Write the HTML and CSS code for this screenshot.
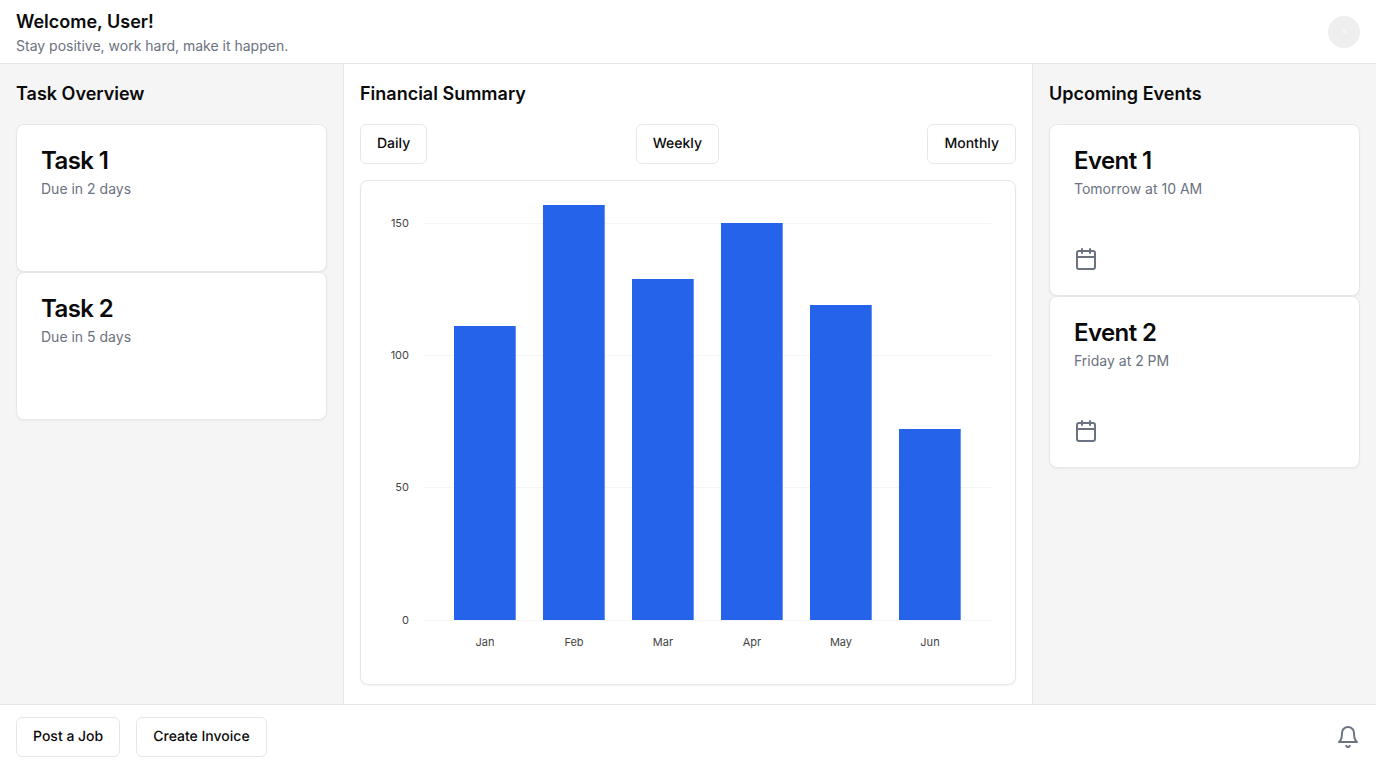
FILE: index.html
```html
<!DOCTYPE html>
<html lang="en">
<head>
<meta charset="utf-8">
<title>Dashboard</title>
<link rel="stylesheet" href="styles.css">
</head>
<body>
<div class="app">
  <header class="topbar">
    <div>
      <h1 class="welcome">Welcome, User!</h1>
      <p class="tagline">Stay positive, work hard, make it happen.</p>
    </div>
    <div class="avatar"><span class="avatar-dot"></span></div>
  </header>
  <main class="columns">
    <section class="col side">
      <h2 class="col-title">Task Overview</h2>
      <div class="stack">
        <article class="card">
          <h3 class="card-title">Task 1</h3>
          <p class="card-sub">Due in 2 days</p>
          <div class="card-foot"></div>
        </article>
        <article class="card">
          <h3 class="card-title">Task 2</h3>
          <p class="card-sub">Due in 5 days</p>
          <div class="card-foot"></div>
        </article>
      </div>
    </section>
    <section class="col center">
      <h2 class="col-title">Financial Summary</h2>
      <div class="range">
        <button class="btn">Daily</button>
        <button class="btn">Weekly</button>
        <button class="btn">Monthly</button>
      </div>
      <div class="chart-card">
        <svg class="chart" width="654" height="503" viewBox="361 181 654 503">
          <g class="grid">
            <line x1="424" x2="991" y1="223.5" y2="223.5"/>
            <line x1="424" x2="991" y1="355.5" y2="355.5"/>
            <line x1="424" x2="991" y1="487.5" y2="487.5"/>
            <line x1="424" x2="991" y1="620.5" y2="620.5"/>
          </g>
          <g class="bars">
            <rect x="454" y="326" width="61.7" height="294"/>
            <rect x="543" y="205" width="61.7" height="415"/>
            <rect x="632" y="279" width="61.7" height="341"/>
            <rect x="721" y="223" width="61.7" height="397"/>
            <rect x="810" y="305" width="61.7" height="315"/>
            <rect x="899" y="429" width="61.7" height="191"/>
          </g>
          <g class="y-labels">
            <text x="409" y="227">150</text>
            <text x="409" y="359">100</text>
            <text x="409" y="491">50</text>
            <text x="409" y="624">0</text>
          </g>
          <g class="x-labels">
            <text x="485" y="646">Jan</text>
            <text x="574" y="646">Feb</text>
            <text x="663" y="646">Mar</text>
            <text x="752" y="646">Apr</text>
            <text x="841" y="646">May</text>
            <text x="930" y="646">Jun</text>
          </g>
        </svg>
      </div>
    </section>
    <section class="col side right">
      <h2 class="col-title">Upcoming Events</h2>
      <div class="stack">
        <article class="card">
          <h3 class="card-title">Event 1</h3>
          <p class="card-sub">Tomorrow at 10 AM</p>
          <div class="card-foot">
            <svg class="icon" viewBox="0 0 24 24"><path d="M8 2v4"/><path d="M16 2v4"/><rect x="3" y="4" width="18" height="18" rx="2"/><path d="M3 10h18"/></svg>
          </div>
        </article>
        <article class="card">
          <h3 class="card-title">Event 2</h3>
          <p class="card-sub">Friday at 2 PM</p>
          <div class="card-foot">
            <svg class="icon" viewBox="0 0 24 24"><path d="M8 2v4"/><path d="M16 2v4"/><rect x="3" y="4" width="18" height="18" rx="2"/><path d="M3 10h18"/></svg>
          </div>
        </article>
      </div>
    </section>
  </main>
  <footer class="bottombar">
    <div class="actions">
      <button class="btn">Post a Job</button>
      <button class="btn">Create Invoice</button>
    </div>
    <svg class="icon" viewBox="0 0 24 24"><path d="M6 8a6 6 0 0 1 12 0c0 7 3 9 3 9H3s3-2 3-9"/><path d="M10.3 21a1.94 1.94 0 0 0 3.4 0"/></svg>
  </footer>
</div>
</body>
</html>
```
FILE: styles.css
```css
* { box-sizing: border-box; }
html, body { margin: 0; padding: 0; }
body {
  font-family: Inter, "Liberation Sans", sans-serif;
  color: #0a0a0a;
  background: #fff;
}
h1, h2, h3, p { margin: 0; }
.app { display: flex; flex-direction: column; width: 1376px; height: 768px; overflow: hidden; }
.topbar {
  flex: none; height: 64px; display: flex; align-items: center; justify-content: space-between;
  padding: 0 16px; border-bottom: 1px solid #e5e7eb; background: #fff;
}
.welcome { font-size: 18px; line-height: 28px; font-weight: 600; }
.tagline { font-size: 14px; line-height: 20px; color: #6b7280; }
.avatar {
  width: 32px; height: 32px; border-radius: 50%; background: #eeeeee;
  display: flex; align-items: center; justify-content: center;
}
.avatar-dot { width: 5px; height: 5px; border-radius: 50%; background: #f4f4f4; }
.columns { flex: 1; display: grid; grid-template-columns: 344px 689px 343px; min-height: 0; }
.col { padding: 16px; }
.side { background: #f5f5f5; }
.center { background: #fff; border-right: 1px solid #e5e7eb; }
.side:first-child { border-right: 1px solid #e5e7eb; }
.col-title { font-size: 18px; line-height: 28px; font-weight: 600; margin-bottom: 16px; }
.stack { display: flex; flex-direction: column; }
.card {
  background: #fff; border: 1px solid #e5e7eb; border-radius: 8px;
  box-shadow: 0 1px 2px rgba(0,0,0,.05); padding: 24px;
}
.card-title { font-size: 24px; line-height: 24px; font-weight: 600; letter-spacing: -0.6px; }
.card-sub { margin-top: 6px; font-size: 14px; line-height: 20px; color: #6b7280; }
.card-foot { margin-top: 48px; display: flex; }
.icon { width: 24px; height: 24px; fill: none; stroke: #6b7280; stroke-width: 2; stroke-linecap: round; stroke-linejoin: round; display: block; }
.btn {
  height: 40px; padding: 0 16px; background: #fff; border: 1px solid #e5e7eb; border-radius: 6px;
  font-family: inherit; font-size: 14px; line-height: 20px; font-weight: 500; color: #0a0a0a;
  text-rendering: geometricPrecision; display: inline-flex; align-items: center; justify-content: center;
}
.range { display: flex; justify-content: space-between; margin-bottom: 16px; }
.chart-card { height: 505px; background: #fff; border: 1px solid #e5e7eb; border-radius: 8px; box-shadow: 0 1px 2px rgba(0,0,0,.05); }
.chart { display: block; }
.grid line { stroke: #f5f5f5; stroke-width: 1; }
.bars rect { fill: #2563eb; }
.y-labels text, .x-labels text { font-family: Inter, sans-serif; font-size: 11px; fill: #444; }
.y-labels text { text-anchor: end; }
.x-labels text { text-anchor: middle; }
.bottombar {
  flex: none; height: 64px; display: flex; align-items: center; justify-content: space-between;
  padding: 0 16px; border-top: 1px solid #e5e7eb; background: #fff;
}
.actions { display: flex; gap: 16px; }
```
